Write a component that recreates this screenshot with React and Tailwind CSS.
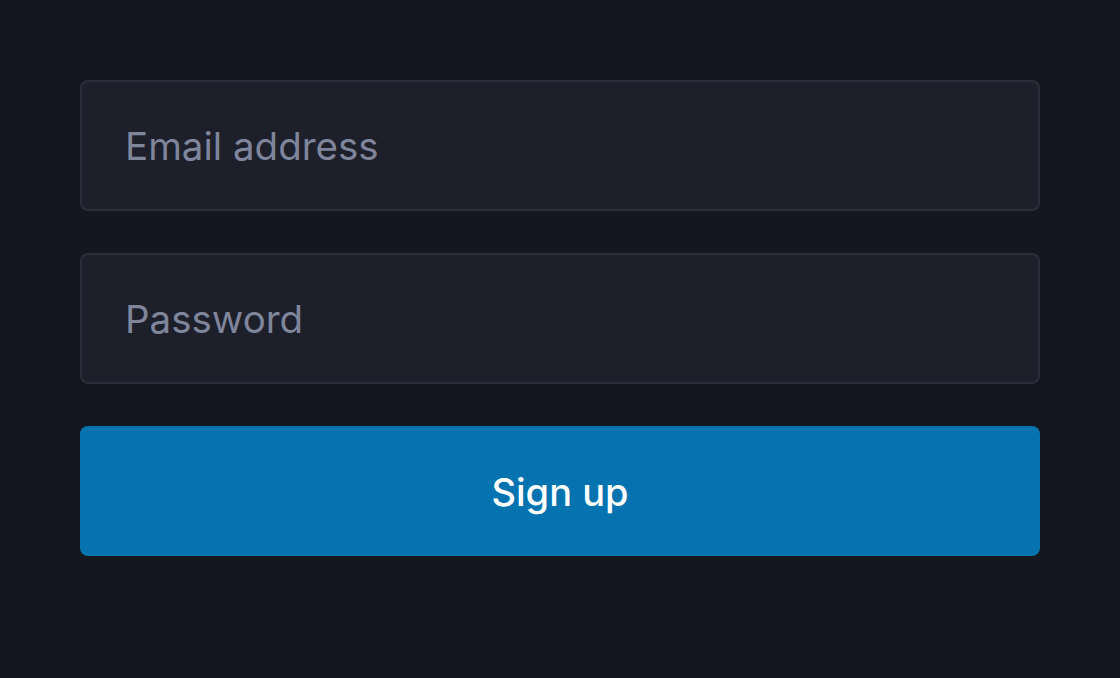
import React, { useState } from 'react';

const App = () => {
  const [email, setEmail] = useState('');
  const [password, setPassword] = useState('');

  return (
    <div className="min-h-[678px] bg-[#14171f] px-20 pt-20 font-['Inter',sans-serif]">
      <form className="flex flex-col gap-[42px]" onSubmit={(e) => e.preventDefault()}>
        <input
          type="email"
          placeholder="Email address"
          value={email}
          onChange={(e) => setEmail(e.target.value)}
          className="h-[131px] w-full rounded-lg border-2 border-[#2a2e3a] bg-[#1d202b] px-[43px] text-[38.5px] text-white outline-none placeholder:text-[#7f859a]"
        />
        <input
          type="password"
          placeholder="Password"
          value={password}
          onChange={(e) => setPassword(e.target.value)}
          className="h-[131px] w-full rounded-lg border-2 border-[#2a2e3a] bg-[#1d202b] px-[43px] text-[38.5px] text-white outline-none placeholder:text-[#7f859a]"
        />
        <button type="submit" className="h-[130px] w-full rounded-lg bg-[#0473b0] pt-[2px] text-[38px] font-medium text-white">
          Sign up
        </button>
      </form>
    </div>
  );
};

export default App;
